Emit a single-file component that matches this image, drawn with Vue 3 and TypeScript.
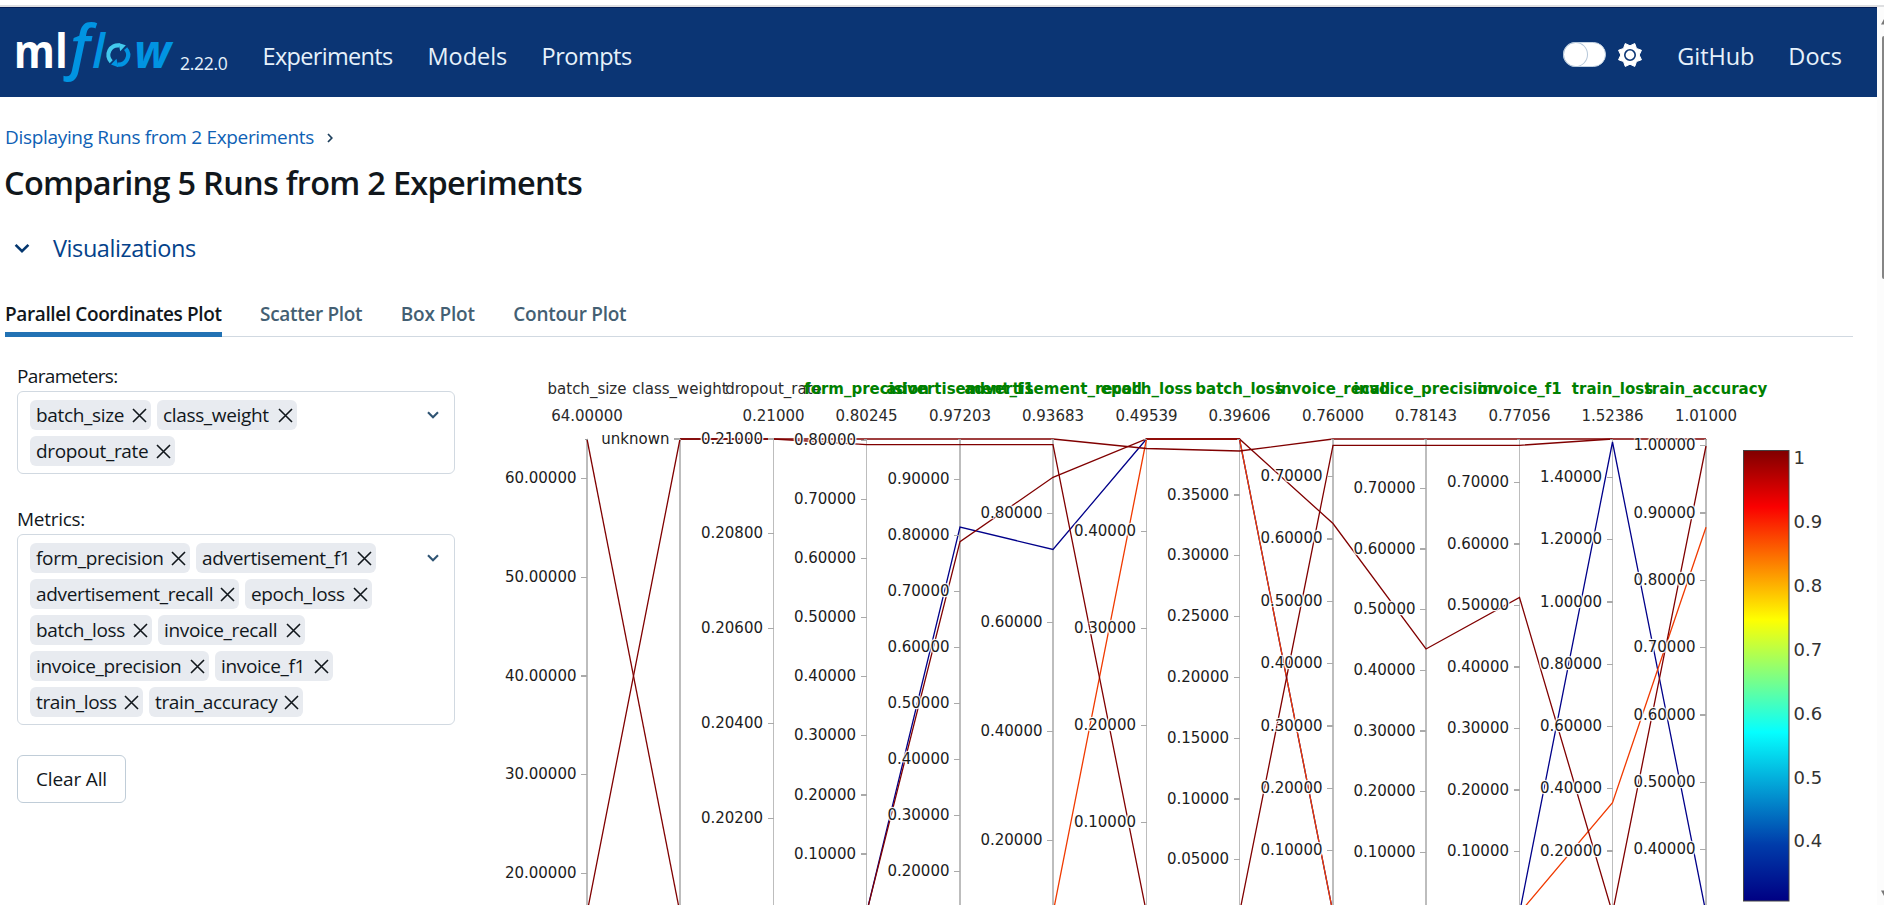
<script setup lang="ts">
interface Label { text: string; track: number }
interface Tag { name: string; width: number }
interface Axis { name: string; max: string; metric: boolean; ticks: [string, number][] }
interface Run { color: string; d: string }

const nav: Label[] = [
  { text: 'Experiments', track: -0.67 },
  { text: 'Models', track: -0.05 },
  { text: 'Prompts', track: -0.5 },
]
const links: Label[] = [
  { text: 'GitHub', track: -0.1 },
  { text: 'Docs', track: 0 },
]
const tabs: Label[] = [
  { text: 'Parallel Coordinates Plot', track: -0.38 },
  { text: 'Scatter Plot', track: -0.34 },
  { text: 'Box Plot', track: -0.18 },
  { text: 'Contour Plot', track: -0.26 },
]
const groups: { label: string; key: string; tags: Tag[] }[] = [
  {
    label: 'Parameters:',
    key: 'parameters',
    tags: [
      { name: 'batch_size', width: 121 },
      { name: 'class_weight', width: 140 },
      { name: 'dropout_rate', width: 145 },
    ],
  },
  {
    label: 'Metrics:',
    key: 'metrics',
    tags: [
      { name: 'form_precision', width: 160 },
      { name: 'advertisement_f1', width: 180 },
      { name: 'advertisement_recall', width: 209 },
      { name: 'epoch_loss', width: 127 },
      { name: 'batch_loss', width: 122 },
      { name: 'invoice_recall', width: 147 },
      { name: 'invoice_precision', width: 179 },
      { name: 'invoice_f1', width: 118 },
      { name: 'train_loss', width: 113 },
      { name: 'train_accuracy', width: 154 },
    ],
  },
]

const TOP = 439
const BOTTOM = 913
const X = [587, 680, 773.5, 866.5, 960, 1053, 1146.5, 1239.5, 1333, 1426, 1519.5, 1612.5, 1706]

/* Evenly spaced ticks, listed from the highest value down. */
function scale(from: number, step: number, count: number, y: number, dy: number): [string, number][] {
  return Array.from({ length: count }, (_, i) => [(from - i * step).toFixed(5), y + i * dy])
}

const axes: Axis[] = [
  { name: 'batch_size', max: '64.00000', metric: false, ticks: scale(60, 10, 5, 478.4, 98.75) },
  { name: 'class_weight', max: '', metric: false, ticks: [['unknown', TOP]] },
  { name: 'dropout_rate', max: '0.21000', metric: false, ticks: scale(0.21, 0.002, 5, TOP, 94.8) },
  { name: 'form_precision', max: '0.80245', metric: true, ticks: scale(0.8, 0.1, 8, 440.3, 59.1) },
  { name: 'advertisement_f1', max: '0.97203', metric: true, ticks: scale(0.9, 0.1, 8, 479.3, 56) },
  { name: 'advertisement_recall', max: '0.93683', metric: true, ticks: scale(0.8, 0.2, 4, 513.5, 109) },
  { name: 'epoch_loss', max: '0.49539', metric: true, ticks: scale(0.4, 0.1, 4, 531.5, 97) },
  { name: 'batch_loss', max: '0.39606', metric: true, ticks: scale(0.35, 0.05, 7, 495, 60.8) },
  { name: 'invoice_recall', max: '0.76000', metric: true, ticks: scale(0.7, 0.1, 7, 476.5, 62.35) },
  { name: 'invoice_precision', max: '0.78143', metric: true, ticks: scale(0.7, 0.1, 7, 488.3, 60.7) },
  { name: 'invoice_f1', max: '0.77056', metric: true, ticks: scale(0.7, 0.1, 7, 482.5, 61.5) },
  { name: 'train_loss', max: '1.52386', metric: true, ticks: scale(1.4, 0.2, 7, 477.5, 62.25) },
  { name: 'train_accuracy', max: '1.01000', metric: true, ticks: scale(1, 0.1, 7, 445.7, 67.3) },
]

function path(points: [number, number][]): string {
  return points.map(([i, y], n) => `${n ? 'L' : 'M'}${X[i]} ${y}`).join(' ')
}

const runs: Run[] = [
  { color: '#00008a', d: path([[3, BOTTOM], [4, 527], [5, 549.5], [6, TOP], [7, TOP], [8, BOTTOM]]) },
  { color: '#00008a', d: path([[10, BOTTOM], [11, 442], [12, BOTTOM]]) },
  { color: '#f03a00', d: path([[5, BOTTOM], [6, TOP], [7, TOP], [8, BOTTOM]]) },
  { color: '#f03a00', d: path([[10, BOTTOM], [11, 802.7], [12, 527.3]]) },
  { color: '#800000', d: path([[0, BOTTOM], [1, TOP], [2, TOP], [3, 444.7], [4, 444.7], [5, 444.7], [6, BOTTOM]]) },
  { color: '#800000', d: path([[7, BOTTOM], [8, 445.3], [9, 445.3], [10, 445.3], [11, TOP]]) },
  { color: '#800000', d: path([[3, BOTTOM], [4, 541.7], [5, 477.3], [6, TOP], [7, TOP], [8, 523.5], [9, 649], [10, 597.5], [11, BOTTOM], [12, 446]]) },
  { color: '#800000', d: path([[0, TOP], [1, BOTTOM]]) },
  { color: '#800000', d: path([[1, TOP], [2, TOP], [3, TOP], [4, TOP], [5, TOP], [6, 448.5], [7, 451], [8, TOP], [9, TOP], [10, TOP], [11, TOP], [12, TOP]]) },
]

const legend = ['1', '0.9', '0.8', '0.7', '0.6', '0.5', '0.4'].map((text, i) => ({ text, y: 464 + i * 63.9 }))

const burst = Array.from({ length: 16 }, (_, i) => {
  const r = i % 2 ? 9.2 : 12.4
  const a = ((22.5 + i * 22.5) * Math.PI) / 180
  return `${(r * Math.cos(a)).toFixed(2)},${(r * Math.sin(a)).toFixed(2)}`
}).join(' ')
</script>

<template>
  <div class="screen">
    <div class="strip"></div>
    <div class="body">
      <div class="page">
        <header class="navbar">
          <svg class="logo" width="160" height="66" viewBox="14 18 160 66" role="img" aria-label="mlflow">
            <text class="logo-ml" x="13.8" y="69" textLength="54" lengthAdjust="spacingAndGlyphs">ml</text>
            <text class="logo-f" x="70" y="68.5">f</text>
            <text class="logo-l" x="92" y="69">l</text>
            <g fill="none" stroke-width="4.2">
              <path d="M111.2 62.800A9.600 9.600 0 0 1 119.500 46.500" stroke="#43c9ed" />
              <path d="M125.600 49.600A9.600 9.600 0 0 1 117.300 65.600" stroke="#0194e2" />
            </g>
            <path d="M118.500 43.900l7.300 2.300-5.600 6z" fill="#43c9ed" />
            <path d="M118.200 68.200l-7.200-2.600 5.500-5.800z" fill="#0194e2" />
            <text class="logo-w" x="134" y="69" textLength="37" lengthAdjust="spacingAndGlyphs">w</text>
          </svg>
          <span class="version">2.22.0</span>
          <nav class="menu">
            <a v-for="n in nav" :key="n.text" :class="n.text.toLowerCase()" :style="{ letterSpacing: n.track + 'px' }">{{ n.text }}</a>
          </nav>
          <div class="tools">
            <span class="switch"><span class="thumb"></span></span>
            <svg class="sun" width="26" height="26" viewBox="-13 -13 26 26">
              <polygon :points="burst" fill="#fff" stroke="#fff" stroke-width="1" stroke-linejoin="round" />
              <circle r="5.2" fill="#fff" stroke="#0b3574" stroke-width="1.6" />
            </svg>
            <a v-for="l in links" :key="l.text" :class="l.text.toLowerCase()" :style="{ letterSpacing: l.track + 'px' }">{{ l.text }}</a>
          </div>
        </header>

        <main>
          <div class="crumbs">
            <a>Displaying Runs from 2 Experiments</a>
            <svg width="6" height="10" viewBox="0 0 6 10"><path d="M1 1l3.8 4L1 9" fill="none" stroke="#1d3f5c" stroke-width="1.7" /></svg>
          </div>
          <h1>Comparing 5 Runs from 2 Experiments</h1>
          <div class="section">
            <svg width="16" height="11" viewBox="0 0 16 11"><path d="M1.6 1.8L8 8.2l6.4-6.4" fill="none" stroke="#04376f" stroke-width="2.6" /></svg>
            <span>Visualizations</span>
          </div>
          <div class="tabs">
            <span v-for="(t, i) in tabs" :key="t.text" class="tab" :class="{ active: i === 0 }" :style="{ letterSpacing: t.track + 'px' }">{{ t.text }}</span>
          </div>

          <div class="content">
            <aside>
              <section v-for="g in groups" :key="g.key" :class="g.key">
                <label>{{ g.label }}</label>
                <div class="select">
                  <div class="tags">
                    <span v-for="t in g.tags" :key="t.name" class="tag" :style="{ width: t.width + 'px' }">
                      {{ t.name }}
                      <svg width="15" height="15" viewBox="0 0 15 15"><path d="M1 1l13 13M14 1L1 14" stroke="#11171c" stroke-width="1.6" /></svg>
                    </span>
                  </div>
                  <svg class="caret" width="12" height="8" viewBox="0 0 12 8"><path d="M1 1.2l5 5 5-5" fill="none" stroke="#2f5473" stroke-width="2.1" /></svg>
                </div>
              </section>
              <button>Clear All</button>
            </aside>

            <svg class="plot" width="1397" height="545" viewBox="480 360 1397 545">
              <defs>
                <linearGradient id="jet" x1="0" y1="1" x2="0" y2="0">
                  <stop offset="0" stop-color="#000083" />
                  <stop offset="0.125" stop-color="#003caa" />
                  <stop offset="0.375" stop-color="#05ffff" />
                  <stop offset="0.625" stop-color="#ffff00" />
                  <stop offset="0.875" stop-color="#fa0000" />
                  <stop offset="1" stop-color="#800000" />
                </linearGradient>
              </defs>
              <line v-for="(a, i) in axes" :key="a.name" :x1="X[i]" :x2="X[i]" :y1="TOP" :y2="BOTTOM" stroke="#bdbdbd" :stroke-width="i % 4 < 2 ? 2 : 1" />
              <path v-for="(r, i) in runs" :key="i" :d="r.d" :stroke="r.color" fill="none" stroke-width="1.3" />
              <g v-for="(a, i) in axes" :key="a.name">
                <text class="name" :class="{ metric: a.metric }" :x="X[i]" y="394">{{ a.name }}</text>
                <text class="range" :x="X[i]" y="421">{{ a.max }}</text>
                <line :x1="X[i] - 2.5" :x2="X[i] + 0.5" :y1="TOP" :y2="TOP" stroke="#999" />
                <template v-for="t in a.ticks" :key="t[0]">
                  <line :x1="X[i] - 6" :x2="X[i]" :y1="t[1]" :y2="t[1]" stroke="#aaa" stroke-width="1.3" />
                  <text class="tick" :x="X[i] - 10.5" :y="t[1] + 4.6">{{ t[0] }}</text>
                </template>
              </g>
              <rect x="1743.5" y="450.5" width="45.5" height="450.5" fill="url(#jet)" stroke="#444" />
              <text v-for="l in legend" :key="l.text" class="legend" x="1793.5" :y="l.y">{{ l.text }}</text>
            </svg>
          </div>
        </main>
      </div>
      <div class="scrollbar">
        <svg width="3" height="6" viewBox="0 0 3 6"><path d="M0 5.5L3 0v5.5z" fill="#777" /></svg>
        <span class="bar"></span>
        <svg class="down" width="3" height="6" viewBox="0 0 3 6"><path d="M0 .5h3V6z" fill="#777" /></svg>
      </div>
    </div>
  </div>
</template>

<style>
html,
body {
  margin: 0;
  overflow: hidden;
  background: #fff;
}
</style>

<style scoped>
.screen {
  width: 1884px;
  height: 905px;
  overflow: hidden;
  display: flex;
  flex-direction: column;
  font-family: 'Open Sans', 'Noto Sans', sans-serif;
  font-size: 19px;
  line-height: 30px;
  color: #11171c;
  background: #fff;
}
.strip {
  height: 5px;
  flex: none;
  border-bottom: 2px solid #dedfe1;
}
.body {
  display: flex;
  height: 898px;
}
.page {
  width: 1877px;
}
.navbar {
  box-sizing: border-box;
  height: 90px;
  border-top: 1px solid #031c55;
  background: #0b3574;
  color: #e6f1fb;
  display: flex;
  align-items: center;
  padding: 6px 35px 0 14px;
  font-size: 23.5px;
}
.logo {
  flex: none;
  margin-top: -11px;
  overflow: visible;
}
.logo text {
  fill: #0194e2;
  font-style: italic;
  font-weight: 600;
}
.logo .logo-ml {
  font-size: 46.5px;
  font-style: normal;
  font-weight: 700;
  fill: #fff;
}
.logo-f {
  font-size: 59px;
}
.logo-l {
  font-size: 47px;
}
.logo .logo-w {
  font-size: 46px;
  font-weight: 700;
}
.version {
  font-size: 17.5px;
  letter-spacing: -0.3px;
  margin: 14px 0 0 6px;
  width: 82.5px;
}
.menu {
  display: flex;
}
.experiments {
  width: 165px;
}
.models {
  width: 114px;
}
.tools {
  margin-left: auto;
  display: flex;
  align-items: center;
}
.switch {
  box-sizing: border-box;
  width: 43px;
  height: 25px;
  border: 1px solid #c3d2e2;
  border-radius: 13px;
  background: #fff;
  display: flex;
  margin: -2px 11px 0 0;
}
.thumb {
  box-sizing: border-box;
  width: 24.5px;
  height: 25px;
  margin: -1px;
  border: 1px solid #b4c6d8;
  border-radius: 50%;
}
.sun {
  margin: -2px 34px 0 0;
}
.github {
  width: 111px;
}
main {
  padding: 25px 0 0 5px;
}
.crumbs {
  display: flex;
  align-items: center;
  gap: 13px;
  height: 30px;
  color: #0e61b5;
  letter-spacing: -0.32px;
}
.crumbs svg {
  margin-top: 2px;
}
h1 {
  margin: 9px 0 0 -1px;
  font-size: 32.5px;
  line-height: 44px;
  font-weight: 600;
  letter-spacing: -0.72px;
}
.section {
  display: flex;
  align-items: center;
  gap: 23px;
  height: 36px;
  margin: 25px 0 0 9px;
  font-size: 23.5px;
  color: #04428a;
  letter-spacing: -0.42px;
}
.tabs {
  display: flex;
  gap: 38.5px;
  width: 1848px;
  height: 38px;
  margin-top: 32px;
  border-bottom: 1px solid #d1d9e1;
}
.tab {
  box-sizing: border-box;
  font-weight: 600;
  color: #445f73;
  height: 39px;
  padding-top: 1px;
  flex: none;
}
.tab.active {
  color: #11171c;
  border-bottom: 5px solid #2272b4;
}
.content {
  display: flex;
  height: 545px;
  margin-top: 23px;
}
aside {
  width: 475px;
  flex: none;
  box-sizing: border-box;
  padding: 1px 0 0 12px;
}
section {
  width: 438px;
  margin-bottom: 30px;
}
label {
  display: block;
  height: 30px;
}
.parameters label {
  letter-spacing: -0.66px;
}
.metrics label {
  letter-spacing: -0.27px;
}
.select {
  box-sizing: border-box;
  border: 1px solid #d1d9e1;
  border-radius: 6px;
  padding: 8px 15px 7px 12px;
  display: flex;
  justify-content: space-between;
}
.tags {
  width: 370px;
  display: flex;
  flex-wrap: wrap;
  gap: 6px;
}
.tag {
  box-sizing: border-box;
  height: 30px;
  padding: 0 4.5px 0 6px;
  border-radius: 6px;
  background: #e8ebf0;
  display: flex;
  align-items: center;
  justify-content: space-between;
  letter-spacing: -0.34px;
  white-space: nowrap;
  line-height: 31px;
}
.caret {
  margin-top: 11px;
}
button {
  box-sizing: border-box;
  width: 109px;
  height: 48px;
  padding: 0;
  border: 1px solid #c0cdd8;
  border-radius: 6px;
  background: #fff;
  font: inherit;
  color: inherit;
  letter-spacing: -0.15px;
}
.plot {
  flex: none;
  font-family: 'DejaVu Sans', sans-serif;
  font-size: 15px;
}
.plot line {
  shape-rendering: crispEdges;
}
.name,
.range {
  text-anchor: middle;
  fill: #2a2a2a;
}
.name.metric {
  font-weight: 700;
  fill: #008000;
}
.tick {
  text-anchor: end;
  fill: #1c1c1c;
  text-shadow: 1px 1px 1px #fff, -1px -1px 1px #fff, 1px -1px 1px #fff, -1px 1px 1px #fff;
}
.legend {
  font-size: 18px;
  fill: #333;
}
.scrollbar {
  width: 7px;
  background: #fcfcfc;
  display: flex;
  flex-direction: column;
  align-items: flex-end;
  padding-top: 12px;
  box-sizing: border-box;
}
.bar {
  width: 2px;
  height: 243px;
  margin-top: 11px;
  border-radius: 2px 0 0 2px;
  background: #858585;
}
.down {
  margin: auto 0 9px;
}
</style>
